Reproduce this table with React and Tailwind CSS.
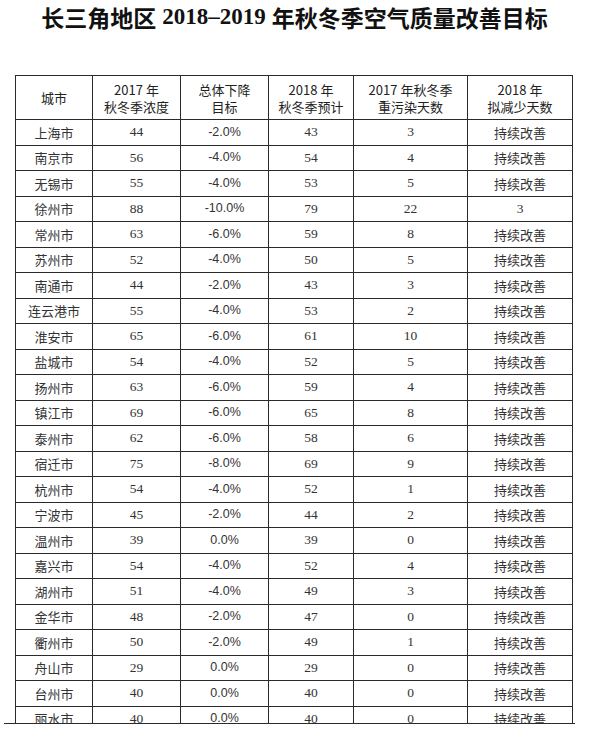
const rows = [
  ['上海市', '44', '-2.0%', '43', '3', '持续改善'],
  ['南京市', '56', '-4.0%', '54', '4', '持续改善'],
  ['无锡市', '55', '-4.0%', '53', '5', '持续改善'],
  ['徐州市', '88', '-10.0%', '79', '22', '3'],
  ['常州市', '63', '-6.0%', '59', '8', '持续改善'],
  ['苏州市', '52', '-4.0%', '50', '5', '持续改善'],
  ['南通市', '44', '-2.0%', '43', '3', '持续改善'],
  ['连云港市', '55', '-4.0%', '53', '2', '持续改善'],
  ['淮安市', '65', '-6.0%', '61', '10', '持续改善'],
  ['盐城市', '54', '-4.0%', '52', '5', '持续改善'],
  ['扬州市', '63', '-6.0%', '59', '4', '持续改善'],
  ['镇江市', '69', '-6.0%', '65', '8', '持续改善'],
  ['泰州市', '62', '-6.0%', '58', '6', '持续改善'],
  ['宿迁市', '75', '-8.0%', '69', '9', '持续改善'],
  ['杭州市', '54', '-4.0%', '52', '1', '持续改善'],
  ['宁波市', '45', '-2.0%', '44', '2', '持续改善'],
  ['温州市', '39', '0.0%', '39', '0', '持续改善'],
  ['嘉兴市', '54', '-4.0%', '52', '4', '持续改善'],
  ['湖州市', '51', '-4.0%', '49', '3', '持续改善'],
  ['金华市', '48', '-2.0%', '47', '0', '持续改善'],
  ['衢州市', '50', '-2.0%', '49', '1', '持续改善'],
  ['舟山市', '29', '0.0%', '29', '0', '持续改善'],
  ['台州市', '40', '0.0%', '40', '0', '持续改善'],
  ['丽水市', '40', '0.0%', '40', '0', '持续改善'],
];

const headers = [
  ['城市'],
  ['2017 年', '秋冬季浓度'],
  ['总体下降', '目标'],
  ['2018 年', '秋冬季预计'],
  ['2017 年秋冬季', '重污染天数'],
  ['2018 年', '拟减少天数'],
];

const cjk = "font-['Noto_Sans_CJK_SC',sans-serif]";
const num = "font-['Liberation_Serif','Noto_Sans_CJK_SC',serif]";
const pct = "font-['Liberation_Sans',sans-serif]";

export default function App() {
  return (
    <div className="relative w-[589px] h-[732px] overflow-hidden bg-white">
      {/* title */}
      <div className="h-[34px] flex items-center justify-center text-[23px] font-bold text-[#111] leading-[34px]">
        <span className={cjk}>长三角地区</span>
        <span className="font-['Liberation_Serif',serif] mx-[6px]">2018–2019</span>
        <span className={cjk}>年秋冬季空气质量改善目标</span>
      </div>

      {/* table, cut by the page edge */}
      <div className="mt-[41px] ml-[15px] h-[648px] w-[558px] overflow-hidden">
        <div className="grid grid-cols-[77px_88px_88px_85px_114px_105px] border-l border-t border-[#2a2a2a]">
          {headers.map((h, i) => (
            <div
              key={i}
              className={`h-[44px] border-r border-b border-[#2a2a2a] flex flex-col items-center justify-center text-[13px] leading-[17px] text-[#222] ${cjk}`}
            >
              {h.map((line) => (
                <span key={line}>{line}</span>
              ))}
            </div>
          ))}

          {rows.map((r) =>
            r.map((cell, j) => {
              let font = num + ' text-[13.5px]';
              if (j === 0 || cell === '持续改善') font = cjk + ' text-[13px]';
              else if (j === 2) font = pct + ' text-[12.5px]';
              return (
                <div
                  key={r[0] + j}
                  className={`h-[25.5px] border-r border-b border-[#2a2a2a] flex items-center justify-center text-[#333] ${font}`}
                >
                  {cell}
                </div>
              );
            })
          )}
        </div>
      </div>

      {/* page bottom edge */}
      <div className="absolute left-[4px] top-[723px] w-[571px] border-t border-[#2a2a2a]" />
    </div>
  );
}
